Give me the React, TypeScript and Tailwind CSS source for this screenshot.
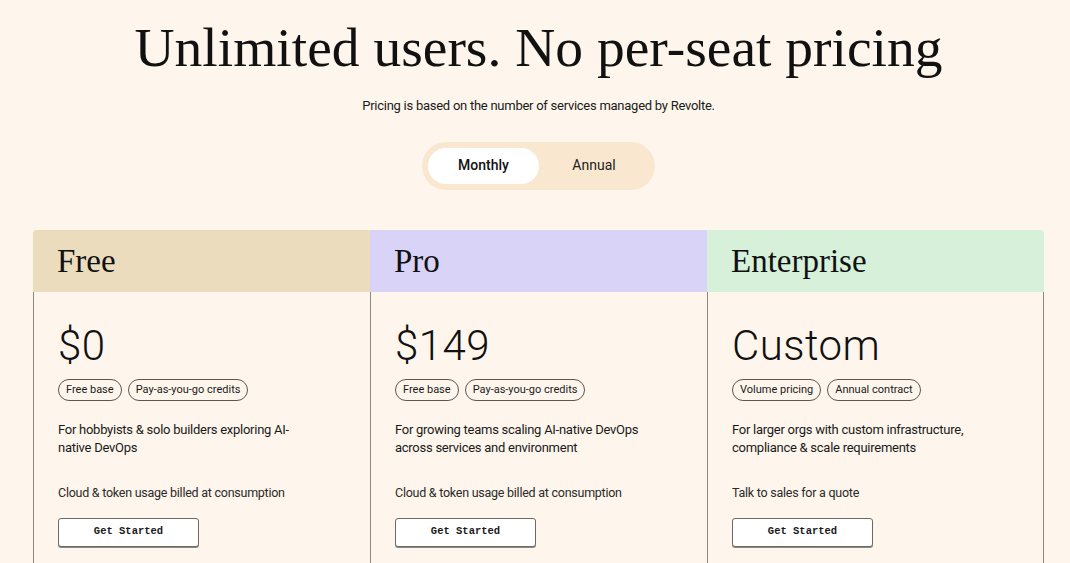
import React, { useState } from "react";

type Plan = {
  name: string;
  price: string;
  tags: string[];
  blurb: string;
  note: string;
  headerClass: string;
  edgeClass: string;
};

const plans: Plan[] = [
  {
    name: "Free",
    price: "$0",
    tags: ["Free base", "Pay-as-you-go credits"],
    blurb: "For hobbyists & solo builders exploring AI-native DevOps",
    note: "Cloud & token usage billed at consumption",
    headerClass: "bg-[#ecdcbe] rounded-tl-[4px]",
    edgeClass: "border-l",
  },
  {
    name: "Pro",
    price: "$149",
    tags: ["Free base", "Pay-as-you-go credits"],
    blurb: "For growing teams scaling AI-native DevOps across services and environment",
    note: "Cloud & token usage billed at consumption",
    headerClass: "bg-[#d9d3f8]",
    edgeClass: "border-l",
  },
  {
    name: "Enterprise",
    price: "Custom",
    tags: ["Volume pricing", "Annual contract"],
    blurb: "For larger orgs with custom infrastructure, compliance & scale requirements",
    note: "Talk to sales for a quote",
    headerClass: "bg-[#d6f0da] rounded-tr-[4px]",
    edgeClass: "border-l border-r",
  },
];

const serif = "font-['Liberation_Serif',serif]";
const sans = "font-['Roboto',sans-serif]";

function PlanCard({ plan }: { plan: Plan }) {
  return (
    <div className="flex flex-col">
      <div className={`h-[62px] flex items-center px-6 ${plan.headerClass}`}>
        <h3 className={`${serif} text-[33px] leading-[40px] text-[#111]`}>
          {plan.name}
        </h3>
      </div>
      <div className={`flex-1 border-[#8c8a80] px-6 pt-[30px] pb-10 ${plan.edgeClass}`}>
        <div className={`${sans} text-[42px] leading-[48px] text-[#111] font-light tracking-[0.01em]`}>
          {plan.price}
        </div>
        <div className="flex gap-[6px] mt-[9px]">
          {plan.tags.map((tag) => (
            <span
              key={tag}
              className={`${sans} text-[11px] leading-[20px] px-[7px] rounded-full border border-[#5a5852] text-[#1a1a1a]`}
            >
              {tag}
            </span>
          ))}
        </div>
        <p className={`${sans} mt-[20px] max-w-[255px] text-[13px] leading-[18px] tracking-[-0.02em] text-[#1a1a1a]`}>
          {plan.blurb}
        </p>
        <p className={`${sans} mt-[27px] text-[12.5px] leading-[18px] tracking-[-0.02em] text-[#2a2a2a]`}>
          {plan.note}
        </p>
        <button className="mt-[16px] w-[141px] h-[29px] bg-white border border-[#6b6a66] rounded-[3px] shadow-[0_1px_0_#8a8984] font-['Liberation_Mono',monospace] font-bold text-[10.5px] text-[#1a1a1a]">
          Get Started
        </button>
      </div>
    </div>
  );
}

export default function App() {
  const [billing, setBilling] = useState<"monthly" | "annual">("monthly");

  return (
    <div className="min-h-screen bg-[#fef6ec] overflow-hidden pl-[33px] pr-[26px]">
      <div className="flex flex-col items-center pt-[15px]">
        <h1 className={`${serif} text-[55.5px] leading-[66px] text-[#111]`}>
          Unlimited users. No per-seat pricing
        </h1>
        <p className={`${sans} mt-[15px] text-[13px] tracking-[-0.02em] text-[#1a1a1a]`}>
          Pricing is based on the number of services managed by Revolte.
        </p>

        <div className="mt-[26px] flex p-[6px] rounded-full bg-[#f9e7d0]">
          <button
            onClick={() => setBilling("monthly")}
            className={`${sans} w-[111px] h-[36px] rounded-full text-[14px] ${
              billing === "monthly" ? "bg-white font-medium text-[#111]" : "text-[#222]"
            }`}
          >
            Monthly
          </button>
          <button
            onClick={() => setBilling("annual")}
            className={`${sans} w-[110px] h-[36px] rounded-full text-[14px] ${
              billing === "annual" ? "bg-white font-medium text-[#111]" : "text-[#222]"
            }`}
          >
            Annual
          </button>
        </div>
      </div>

      <div className="mt-[40px] grid grid-cols-3">
        {plans.map((plan) => (
          <PlanCard key={plan.name} plan={plan} />
        ))}
      </div>
    </div>
  );
}
